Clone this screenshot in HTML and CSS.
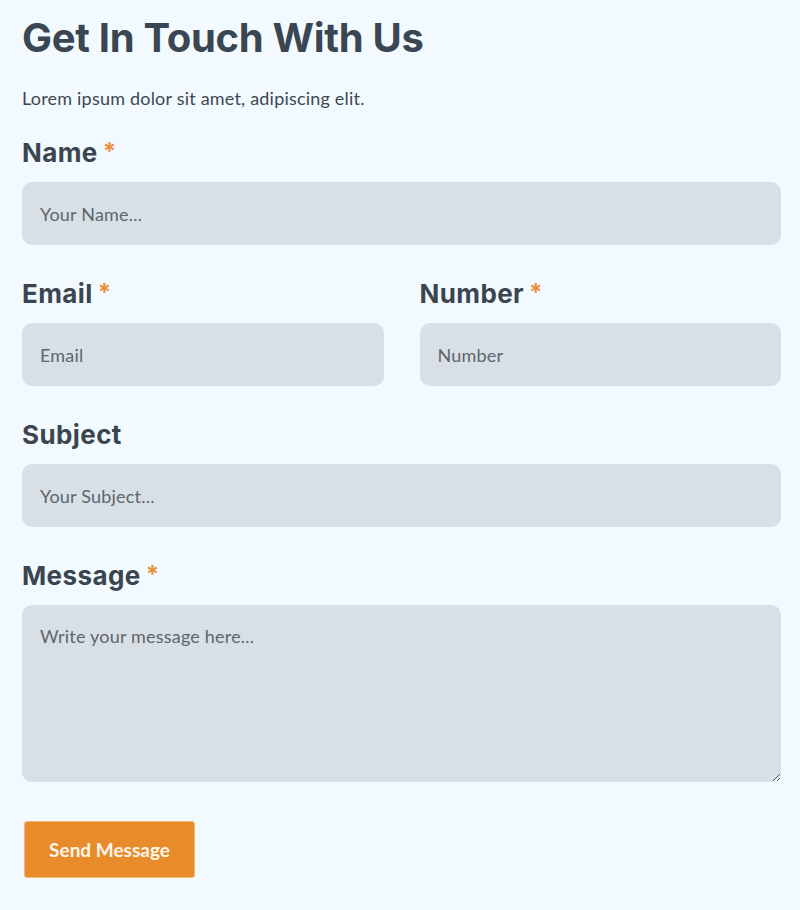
FILE: index.html
```html
<!DOCTYPE html>
<html lang="en">

<head>
    <meta charset="UTF-8">
    <meta name="viewport" content="width=device-width, initial-scale=1.0">
    <title>Contact</title>
    <link rel="stylesheet" href="styles.css">
</head>

<body>
    <div id="contact">
        <h1 class="title">Get In Touch With Us</h1>
        <p class="intro">Lorem ipsum dolor sit amet, adipiscing elit.</p>

        <form class="contact-form" onsubmit="return false">
            <div class="field">
                <label class="field-label" for="name">Name<span class="req">*</span></label>
                <input class="field-input" type="text" id="name" placeholder="Your Name...">
            </div>

            <div class="field-row">
                <div class="field">
                    <label class="field-label" for="email">Email<span class="req">*</span></label>
                    <input class="field-input" type="email" id="email" placeholder="Email">
                </div>
                <div class="field">
                    <label class="field-label" for="number">Number<span class="req">*</span></label>
                    <input class="field-input" type="text" id="number" placeholder="Number">
                </div>
            </div>

            <div class="field">
                <label class="field-label" for="subject">Subject</label>
                <input class="field-input" type="text" id="subject" placeholder="Your Subject...">
            </div>

            <div class="field">
                <label class="field-label" for="message">Message<span class="req">*</span></label>
                <textarea class="field-input field-textarea" id="message" placeholder="Write your message here..."></textarea>
            </div>

            <button type="submit" class="btn">Send Message</button>
        </form>
    </div>
</body>

</html>
```

FILE: styles.css
```css
html,
body {
    margin: 0;
    height: 100%;
    width: 100%;
    background-color: #F2FAFF;
}

body {
    font-family: Lato, "Open Sans", sans-serif;
    color: #3B4550;
}

#contact {
    padding: 14px 19px 0 22px;
}

.title {
    margin: 0;
    font-family: Inter, Roboto, sans-serif;
    font-size: 40px;
    line-height: 48px;
    font-weight: 700;
    letter-spacing: -0.3px;
    color: #3A4651;
}

.intro {
    margin: 24px 0 28px 0;
    font-size: 18px;
    line-height: 24px;
    letter-spacing: 0.2px;
    color: #3E4852;
}

.field {
    display: flex;
    flex-direction: column;
    margin-bottom: 34px;
}

.field-row {
    display: grid;
    grid-template-columns: 1fr 1fr;
    column-gap: 36px;
}

.field-label {
    display: block;
    height: 30px;
    margin-bottom: 14px;
    font-family: Inter, Roboto, sans-serif;
    font-size: 26px;
    line-height: 30px;
    font-weight: 700;
    letter-spacing: 0.4px;
    color: #3B4550;
}

.req {
    margin-left: 5px;
    color: #E8913A;
    font-size: 24px;
    line-height: 0;
    vertical-align: 2px;
}

.field-input {
    box-sizing: border-box;
    width: 100%;
    height: 63px;
    padding: 0 18px;
    border: none;
    border-radius: 10px;
    background-color: #D8DFE5;
    font-family: Lato, "Open Sans", sans-serif;
    font-size: 18px;
    letter-spacing: 0.2px;
    color: #3E4852;
    outline: none;
}

.field-input::placeholder {
    color: #5C666E;
}

.field-textarea {
    height: 177px;
    padding-top: 19px;
    line-height: 24px;
    resize: vertical;
}

.btn {
    margin: 5px 0 0 2px;
    width: 171px;
    height: 57px;
    border: 1px solid #F4B878;
    border-radius: 3px;
    background-color: #E88B2A;
    font-family: Lato, "Open Sans", sans-serif;
    font-size: 19px;
    font-weight: 700;
    color: #FFF6EA;
    cursor: pointer;
}
```
